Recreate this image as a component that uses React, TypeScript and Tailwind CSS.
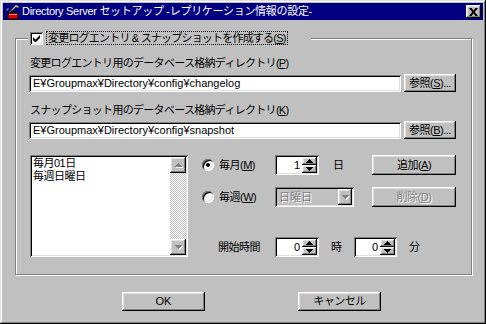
import React from 'react';

const raised =
  'bg-[#c0c0c0] shadow-[inset_-1px_-1px_0_#000,inset_1px_1px_0_#fff,inset_-2px_-2px_0_#808080,inset_2px_2px_0_#dfdfdf]';
const sunken =
  'shadow-[inset_1px_1px_0_#808080,inset_-1px_-1px_0_#fff,inset_2px_2px_0_#000,inset_-2px_-2px_0_#dfdfdf]';
const disabledText = 'text-[#808080] [text-shadow:1px_1px_0_#fff]';

function Arrow({ dir, gray }: { dir: 'up' | 'down'; gray?: boolean }) {
  const d = dir === 'up' ? 'M3 0h1v1h1v1h1v1h1v1H0V3h1V2h1V1h1z' : 'M0 0h7v1H6v1H5v1H4v1H3V3H2V2H1V1H0z';
  return (
    <svg width="7" height="4" viewBox="0 0 7 4" className={gray ? 'drop-shadow-[1px_1px_0_#fff]' : ''}>
      <path d={d} fill={gray ? '#808080' : '#000'} />
    </svg>
  );
}

function AppIcon() {
  return (
    <svg width="16" height="16" viewBox="0 0 16 16">
      <path d="M11 1l2 0 2 2-1 1-2-1-6 6-1-1 6-6z" fill="#c0c0c0" stroke="#404040" strokeWidth="0.8" />
      <path d="M2 6l2-2 1 1-2 2z" fill="#808080" />
      <rect x="4" y="9" width="10" height="6" fill="#e00000" stroke="#000" strokeWidth="1" />
      <rect x="7" y="7" width="4" height="2" fill="none" stroke="#000" strokeWidth="1" />
      <rect x="5" y="10" width="8" height="1" fill="#ff8080" />
    </svg>
  );
}

function Radio({ checked }: { checked?: boolean }) {
  return (
    <div className={`w-[12px] h-[12px] rounded-full bg-white ${sunken} flex items-center justify-center`}>
      {checked && <div className="w-[4px] h-[4px] rounded-full bg-black" />}
    </div>
  );
}

function Spin({ value, className }: { value: string; className: string }) {
  return (
    <div className={`h-[20px] bg-white ${sunken} flex p-[2px] ${className}`}>
      <div className="flex-1 text-right pr-[2px] leading-[16px]">{value}</div>
      <div className="w-[15px] flex flex-col">
        <div className={`h-[8px] ${raised} flex items-center justify-center`}>
          <Arrow dir="up" />
        </div>
        <div className={`h-[8px] ${raised} flex items-center justify-center`}>
          <Arrow dir="down" />
        </div>
      </div>
    </div>
  );
}

export default function App() {
  return (
    <div className="w-[486px] h-[324px] p-[3px] bg-[#c0c0c0] shadow-[inset_-1px_-1px_0_#000,inset_1px_1px_0_#dfdfdf,inset_-2px_-2px_0_#808080,inset_2px_2px_0_#fff] flex flex-col text-black text-[11px] font-['Liberation_Sans','Noto_Sans_CJK_JP',sans-serif]">
      {/* title bar */}
      <div className="h-[17px] bg-[#000080] flex items-center pl-[1px] pr-[2px]">
        <AppIcon />
        <span className="ml-[2px] text-white leading-[17px] whitespace-nowrap tracking-[-0.3px]">
          Directory Server セットアップ -レプリケーション情報の設定-
        </span>
        <div className={`ml-auto w-[15px] h-[13px] ${raised} flex items-center justify-center`}>
          <svg width="9" height="8" viewBox="0 0 9 8">
            <path d="M0 0h2.5l2 2.5 2-2.5H9L5.8 4 9 8H6.5l-2-2.5-2 2.5H0l3.2-4z" fill="#000" />
          </svg>
        </div>
      </div>

      {/* group box */}
      <div className="ml-[12px] mt-[18px] w-[457px] h-[237px] border border-[#808080] shadow-[inset_1px_1px_0_#fff,1px_1px_0_#fff] flex flex-col">
        <div className="-mt-[8px] ml-[12px] w-[283px] h-[14px] bg-[#c0c0c0] flex items-center">
          <div className={`ml-[2px] w-[13px] h-[13px] bg-white ${sunken} flex items-center justify-center`}>
            <svg width="7" height="7" viewBox="0 0 7 7">
              <path d="M0 2l0 3 2 2h1l4-4V0L2.5 4.5z" fill="#000" />
            </svg>
          </div>
          <div className="ml-[3px] h-[14px] px-[1px] border border-dotted border-black leading-[12px] whitespace-nowrap tracking-[-0.8px]">
            変更ログエントリ &amp; スナップショットを作成する(<u>S</u>)
          </div>
        </div>

        <div className="mt-[11px] ml-[14px] h-[14px] leading-[14px] whitespace-nowrap tracking-[-0.7px]">
          変更ログエントリ用のデータベース格納ディレクトリ(<u>P</u>)
        </div>
        <div className="mt-[4px] ml-[13px] flex h-[18px]">
          <div className={`w-[372px] h-[17px] mt-[1px] bg-white ${sunken} px-[4px] leading-[17px] whitespace-nowrap`}>
            E¥Groupmax¥Directory¥config¥changelog
          </div>
          <button className={`ml-[3px] w-[52px] h-[18px] ${raised} leading-[18px] whitespace-nowrap tracking-[-0.5px]`}>
            参照(<u>S</u>)...
          </button>
        </div>

        <div className="mt-[11px] ml-[14px] h-[14px] leading-[14px] whitespace-nowrap tracking-[-0.7px]">
          スナップショット用のデータベース格納ディレクトリ(<u>K</u>)
        </div>
        <div className="mt-[4px] ml-[13px] flex h-[18px]">
          <div className={`w-[372px] h-[17px] mt-[1px] bg-white ${sunken} px-[4px] leading-[17px] whitespace-nowrap`}>
            E¥Groupmax¥Directory¥config¥snapshot
          </div>
          <button className={`ml-[3px] w-[52px] h-[18px] ${raised} leading-[18px] whitespace-nowrap tracking-[-0.5px]`}>
            参照(<u>B</u>)...
          </button>
        </div>

        <div className="mt-[16px] ml-[14px] flex h-[102px]">
          {/* list box */}
          <div className={`w-[158px] h-[102px] bg-white ${sunken} flex p-[2px]`}>
            <div className="flex-1 pl-[1px] leading-[13px] tracking-[-0.5px]">
              <div>毎月01日</div>
              <div>毎週日曜日</div>
            </div>
            <div className="w-[16px] flex flex-col">
              <div className={`h-[16px] ${raised} flex items-center justify-center`}>
                <Arrow dir="up" gray />
              </div>
              <div className="flex-1 bg-[repeating-conic-gradient(#c0c0c0_0_25%,#fff_0_50%)] bg-[length:2px_2px]" />
              <div className={`h-[16px] ${raised} flex items-center justify-center`}>
                <Arrow dir="down" gray />
              </div>
            </div>
          </div>

          <div className="flex flex-col">
            <div className="flex items-center h-[20px]">
              <div className="ml-[14px] w-[73px] flex items-center">
                <Radio checked />
                <span className="ml-[5px] whitespace-nowrap tracking-[-0.5px]">
                  毎月(<u>M</u>)
                </span>
              </div>
              <Spin value="1" className="w-[44px]" />
              <div className="w-[53px] pl-[14px]">日</div>
              <button className={`w-[84px] h-[20px] ${raised} whitespace-nowrap tracking-[-0.5px]`}>
                追加(<u>A</u>)
              </button>
            </div>

            <div className="flex items-center h-[20px] mt-[12px]">
              <div className="ml-[14px] w-[73px] flex items-center">
                <Radio />
                <span className="ml-[5px] whitespace-nowrap tracking-[-0.5px]">
                  毎週(<u>W</u>)
                </span>
              </div>
              <div className={`w-[79px] h-[20px] bg-[#c0c0c0] ${sunken} flex p-[2px]`}>
                <div className={`flex-1 pl-[2px] leading-[16px] ${disabledText}`}>日曜日</div>
                <div className={`w-[14px] ${raised} flex items-center justify-center`}>
                  <Arrow dir="down" gray />
                </div>
              </div>
              <button className={`ml-[18px] w-[84px] h-[20px] ${raised} whitespace-nowrap tracking-[-0.5px] ${disabledText}`}>
                削除(<u>D</u>)
              </button>
            </div>

            <div className="flex items-center h-[20px] mt-[30px]">
              <div className="ml-[30px] w-[57px] whitespace-nowrap tracking-[-0.5px]">開始時間</div>
              <Spin value="0" className="w-[44px]" />
              <div className="w-[35px] pl-[12px]">時</div>
              <Spin value="0" className="w-[43px]" />
              <div className="pl-[12px]">分</div>
            </div>
          </div>
        </div>
      </div>

      {/* dialog buttons */}
      <div className="mt-[17px] flex">
        <button className={`ml-[119px] w-[83px] h-[19px] ${raised}`}>OK</button>
        <button className={`ml-[93px] w-[83px] h-[19px] ${raised} tracking-[-0.5px]`}>キャンセル</button>
      </div>
    </div>
  );
}
